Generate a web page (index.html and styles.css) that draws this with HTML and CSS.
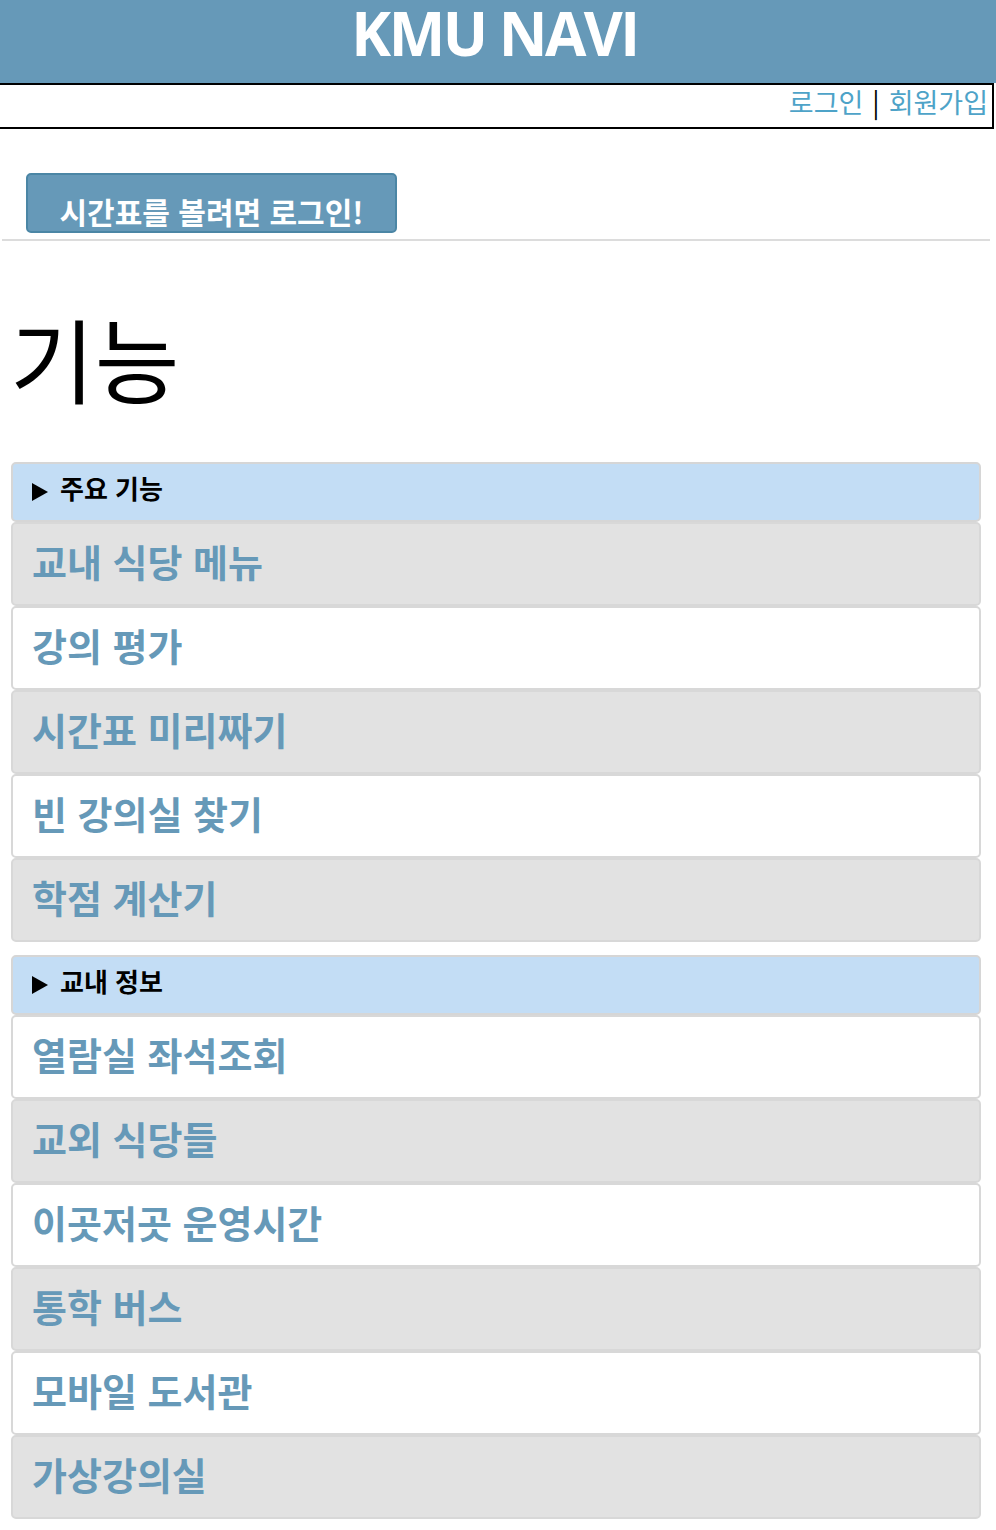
FILE: index.html
```html
<!DOCTYPE html>
<html lang="ko">
<head>
<meta charset="utf-8">
<title>KMU NAVI</title>
<link rel="stylesheet" href="styles.css">
</head>
<body>
<header class="top">
  <h1 class="logo">KMU NAVI</h1>
</header>
<div class="userbar">
  <a class="user-link" href="#">로그인</a><span class="sep">|</span><a class="user-link" href="#">회원가입</a>
</div>
<div class="login-area">
  <a class="login-btn" href="#">시간표를 볼려면 로그인!</a>
</div>
<hr class="divider">
<h2 class="page-title">기능</h2>
<div class="menu">
  <section class="group">
    <div class="group-head"><svg class="arrow" viewBox="0 0 16 18" width="16" height="18"><path d="M0 0 L16 9 L0 18 Z" fill="#000"/></svg>주요 기능</div>
    <a class="item gray" href="#">교내 식당 메뉴</a>
    <a class="item" href="#">강의 평가</a>
    <a class="item gray" href="#">시간표 미리짜기</a>
    <a class="item" href="#">빈 강의실 찾기</a>
    <a class="item gray" href="#">학점 계산기</a>
  </section>
  <section class="group">
    <div class="group-head"><svg class="arrow" viewBox="0 0 16 18" width="16" height="18"><path d="M0 0 L16 9 L0 18 Z" fill="#000"/></svg>교내 정보</div>
    <a class="item" href="#">열람실 좌석조회</a>
    <a class="item gray" href="#">교외 식당들</a>
    <a class="item" href="#">이곳저곳 운영시간</a>
    <a class="item gray" href="#">통학 버스</a>
    <a class="item" href="#">모바일 도서관</a>
    <a class="item gray" href="#">가상강의실</a>
  </section>
</div>
</body>
</html>
```
FILE: styles.css
```css
html, body {
  margin: 0;
  padding: 0;
  background: #ffffff;
}
body {
  font-family: "Noto Sans CJK KR", "Noto Sans", sans-serif;
  color: #000;
}
a {
  text-decoration: none;
}
.top {
  height: 83px;
  background: #6699b8;
  box-sizing: border-box;
  padding-top: 4px;
}
.logo {
  margin: 0;
  padding-right: 7px;
  text-align: center;
  font-family: "Open Sans", "Noto Sans", sans-serif;
  font-weight: 700;
  font-size: 60px;
  line-height: 58px;
  color: #ffffff;
  letter-spacing: -2.5px;
}
.userbar {
  height: 42px;
  border-top: 2px solid #000;
  border-bottom: 2px solid #000;
  border-right: 2px solid #000;
  margin-right: 2px;
  display: flex;
  justify-content: flex-end;
  align-items: flex-start;
  padding-right: 4px;
  font-size: 27px;
  line-height: 34px;
}
.user-link {
  color: #4ea3c8;
}
.sep {
  color: #000;
  margin: 0 9px;
}
.login-area {
  padding: 44px 0 0 26px;
}
.login-btn {
  display: flex;
  justify-content: center;
  align-items: flex-end;
  box-sizing: border-box;
  width: 371px;
  height: 60px;
  background: #6699b8;
  border: 2px solid #4b86a5;
  border-radius: 5px;
  color: #fff;
  font-weight: 700;
  font-size: 30px;
  line-height: 40px;
}
.divider {
  margin: 6px 6px 0 2px;
  border: 0;
  height: 2px;
  background: #dcdcdc;
}
.page-title {
  margin: 61px 0 0 10px;
  font-size: 92px;
  font-weight: 400;
  line-height: 110px;
}
.menu {
  margin: 50px 0 0 11px;
  width: 970px;
}
.group {
  display: flex;
  flex-direction: column;
  margin-bottom: 13px;
}
.group-head {
  box-sizing: border-box;
  height: 60px;
  display: flex;
  align-items: center;
  padding: 0 0 9px 19px;
  background: #c3ddf5;
  border: 2px solid #d6d6d6;
  border-radius: 5px;
  font-size: 26px;
  font-weight: 700;
}
.arrow {
  margin: 8px 12px 0 0;
  flex: none;
}
.item {
  box-sizing: border-box;
  height: 84px;
  display: flex;
  align-items: center;
  padding: 0 0 8px 19px;
  background: #ffffff;
  border: 2px solid #d8d8d8;
  border-radius: 5px;
  color: #6699b8;
  font-size: 38px;
  font-weight: 700;
}
.item.gray {
  background: #e2e2e2;
}
```
